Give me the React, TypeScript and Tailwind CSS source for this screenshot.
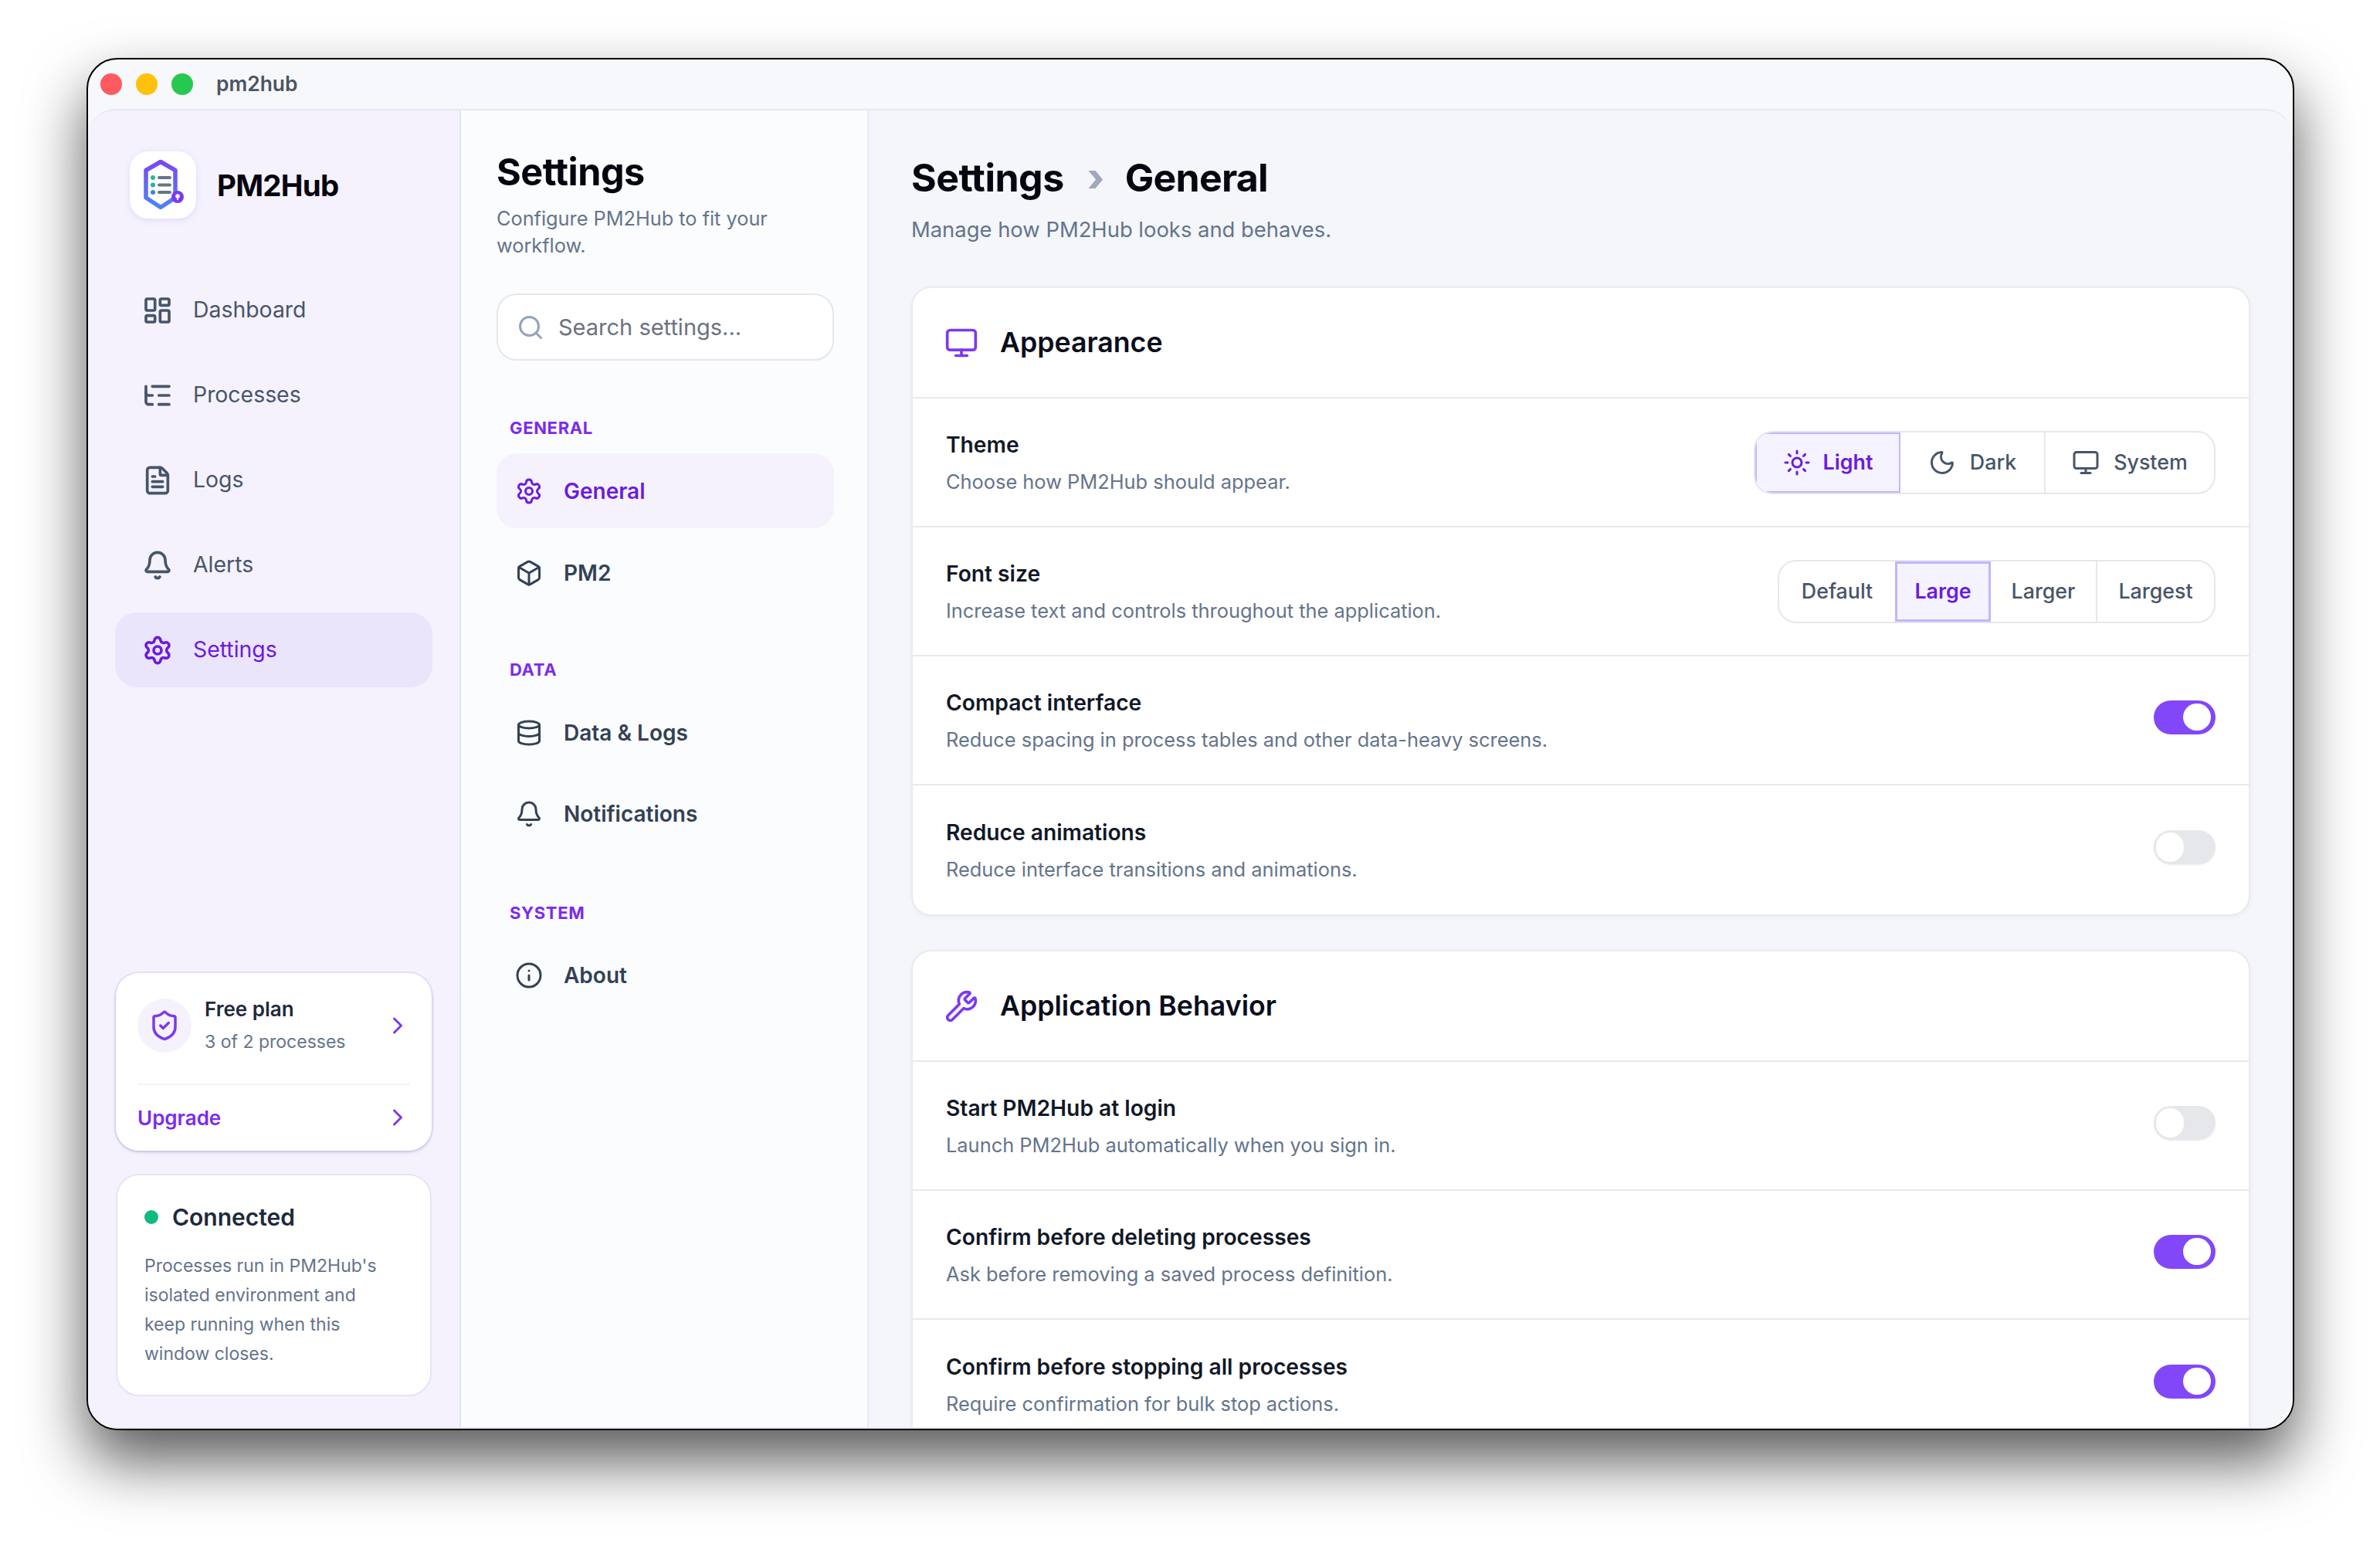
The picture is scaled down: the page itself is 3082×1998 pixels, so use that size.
import React from "react";
import {
  Bell,
  Box,
  ChevronRight,
  Database,
  FileText,
  Info,
  LayoutDashboard,
  ListTree,
  Monitor,
  Moon,
  Search,
  Settings,
  ShieldCheck,
  Sun,
  Wrench,
} from "lucide-react";

const Logo = () => (
  <svg width="60" height="68" viewBox="0 0 60 68" fill="none">
    <defs>
      <linearGradient id="hex" x1="0" y1="0" x2="0" y2="1">
        <stop offset="0" stopColor="#7b49ee" />
        <stop offset="1" stopColor="#4d83f6" />
      </linearGradient>
    </defs>
    <path
      d="M24 3.5 43 14.5V50L24 62.5 5 50V14.5Z"
      stroke="url(#hex)"
      strokeWidth="5.5"
      strokeLinejoin="round"
      fill="#ffffff"
    />
    <circle cx="14" cy="24" r="3" fill="#2fb58f" />
    <circle cx="14" cy="33.5" r="3" fill="#2aaf9f" />
    <circle cx="14" cy="43" r="3" fill="#3b82f6" />
    <path d="M22 24h14M22 33.5h14M22 43h14" stroke="#64748b" strokeWidth="4" strokeLinecap="round" />
    <circle cx="46" cy="49" r="8" fill="#7c3aed" />
    <circle cx="46" cy="48" r="2.8" fill="#ffffff" />
    <path d="M46 49v4" stroke="#ffffff" strokeWidth="1.8" />
  </svg>
);

const NavItem = ({ icon: Icon, label, active }: { icon: any; label: string; active?: boolean }) => (
  <div
    className={`flex h-[97px] items-center rounded-[28px] pl-[35px] text-[28.4px] ${
      active ? "bg-[#eae5fb] text-[#6b1be0]" : "text-[#475569]"
    }`}
  >
    <Icon size={40} strokeWidth={2.2} className="shrink-0" />
    <span className="ml-[26px]">{label}</span>
  </div>
);

const SubItem = ({ icon: Icon, label, active }: { icon: any; label: string; active?: boolean }) => (
  <div
    className={`flex h-[97px] items-center rounded-[26px] pl-[24px] text-[28px] font-semibold ${
      active ? "bg-[#f5f2fe] text-[#6b1be0]" : "text-[#334155]"
    }`}
  >
    <Icon size={36} strokeWidth={2} className="shrink-0" />
    <span className="ml-[27px]">{label}</span>
  </div>
);

const GroupLabel = ({ children }: { children: React.ReactNode }) => (
  <div className="h-[30px] pl-[17px] text-[22px] leading-[30px] font-bold tracking-[0.03em] text-[#7c2bee]">
    {children}
  </div>
);

const Toggle = ({ on }: { on?: boolean }) =>
  on ? (
    <div className="mb-[8px] flex h-[44px] w-[80px] items-center justify-end rounded-full bg-[#8247f8] pr-[6px]">
      <div className="h-[35px] w-[36px] rounded-full bg-white" />
    </div>
  ) : (
    <div className="mb-[8px] flex h-[44px] w-[80px] items-center rounded-full bg-[#e5e7eb] pl-[3px] shadow-[0_1px_2px_rgba(0,0,0,0.08)]">
      <div className="h-[38px] w-[36px] rounded-full bg-white" />
    </div>
  );

const Row = ({
  title,
  desc,
  children,
  last,
}: {
  title: string;
  desc: string;
  children: React.ReactNode;
  last?: boolean;
}) => (
  <div
    className={`flex h-[167px] shrink-0 items-center justify-between pr-[43px] pl-[43px] ${
      last ? "" : "border-b-2 border-[#e7e9ef]"
    }`}
  >
    <div className="pt-[3px]">
      <div className="text-[28.2px] leading-[36px] font-semibold text-[#111827]">{title}</div>
      <div className="mt-[12px] text-[25.4px] leading-[36px] text-[#64748b]">{desc}</div>
    </div>
    {children}
  </div>
);

const Card = ({
  icon: Icon,
  title,
  children,
}: {
  icon: any;
  title: string;
  children: React.ReactNode;
}) => (
  <div className="shrink-0 rounded-[26px] border-2 border-[#e9ebf1] bg-white shadow-[0_2px_6px_rgba(15,23,42,0.04)]">
    <div className="flex h-[143px] items-center border-b-2 border-[#e7e9ef] pl-[41px]">
      <Icon size={44} strokeWidth={2} className="text-[#7c3aed]" />
      <span className="ml-[28px] text-[35.7px] font-semibold text-[#0b0d1c]">{title}</span>
    </div>
    {children}
  </div>
);

export default function App() {
  return (
    <div className="h-[1998px] w-[3082px] overflow-hidden bg-white pt-[75px] pl-[112px] font-['Inter',sans-serif]">
      <div className="flex h-[1777px] w-[2859px] flex-col overflow-hidden rounded-[40px] border-2 border-black bg-[#f7f8fb] shadow-[0_40px_80px_rgba(0,0,0,0.65)]">
        <div className="flex h-[64px] shrink-0 items-center pl-[16px]">
          <div className="h-[28px] w-[28px] rounded-full bg-[#ff5a5f]" />
          <div className="ml-[18px] h-[28px] w-[28px] rounded-full bg-[#fec20d]" />
          <div className="ml-[18px] h-[28px] w-[28px] rounded-full bg-[#27c84f]" />
          <span className="ml-[30px] text-[26.4px] font-semibold text-[#4b5563]">pm2hub</span>
        </div>

        <div className="flex min-h-0 flex-1 overflow-hidden rounded-t-[36px] border-y-2 border-[#e6e7ef]">
          <aside className="flex w-[483px] shrink-0 flex-col border-r-2 border-[#e4e4f0] bg-[#f5f2fe] px-[35px] pb-[40px]">
            <div className="mt-[53px] flex items-center pl-[19px]">
              <div className="flex h-[87px] w-[86px] items-center justify-center rounded-[24px] bg-white pl-[6px] shadow-[0_2px_8px_rgba(109,80,220,0.14)]">
                <Logo />
              </div>
              <span className="mt-[2px] ml-[27px] text-[38.5px] font-bold tracking-[-0.02em] text-[#05060f]">PM2Hub</span>
            </div>
            <nav className="mt-[70px] flex flex-col gap-[13px]">
              <NavItem icon={LayoutDashboard} label="Dashboard" />
              <NavItem icon={ListTree} label="Processes" />
              <NavItem icon={FileText} label="Logs" />
              <NavItem icon={Bell} label="Alerts" />
              <NavItem icon={Settings} label="Settings" active />
            </nav>

            <div className="mx-[1px] mt-auto rounded-[30px] bg-white px-[28px] pt-[29px] pb-[1px] shadow-[0_2px_4px_rgba(80,70,160,0.22),0_0_0_2px_#e7e3f7]">
              <div className="flex h-[78px] items-center">
                <div className="flex h-[70px] w-[70px] shrink-0 items-center justify-center rounded-full bg-[#f5f2fe]">
                  <ShieldCheck size={42} strokeWidth={2} className="text-[#7c3aed]" />
                </div>
                <div className="ml-[17px] flex-1">
                  <div className="text-[26px] leading-[36px] font-semibold text-[#1e293b]">Free plan</div>
                  <div className="mt-[6px] text-[23px] leading-[36px] text-[#64748b]">3 of 2 processes</div>
                </div>
                <ChevronRight size={36} strokeWidth={2} className="-mr-[2px] text-[#7c3aed]" />
              </div>
              <div className="mt-[36px] flex h-[86px] items-center justify-between border-t-2 border-[#f3f3f8]">
                <span className="text-[26px] font-semibold text-[#7c2bee]">Upgrade</span>
                <ChevronRight size={36} strokeWidth={2} className="-mr-[2px] text-[#7c3aed]" />
              </div>
            </div>

            <div className="mx-[1px] mt-[30px] h-[288px] rounded-[30px] border-2 border-[#e7e3f7] bg-white px-[35px] pt-[34px]">
              <div className="flex items-center">
                <div className="h-[18px] w-[18px] rounded-full bg-[#10b981]" />
                <span className="ml-[18px] text-[30px] leading-[40px] font-semibold text-[#1e293b]">Connected</span>
              </div>
              <p className="mt-[24px] max-w-[310px] text-[23px] leading-[38px] text-[#64748b]">
                Processes run in PM2Hub's isolated environment and keep running when this window closes.
              </p>
            </div>
          </aside>

          <div className="flex w-[528px] shrink-0 flex-col border-r-2 border-[#e9ebf1] bg-[#fbfcfe] pr-[43px] pl-[46px]">
            <h1 className="mt-[50px] text-[48.5px] leading-[60px] font-bold tracking-[-0.01em] text-[#05060f]">Settings</h1>
            <p className="mt-[12px] text-[25.3px] leading-[35px] text-[#64748b]">Configure PM2Hub to fit your workflow.</p>
            <div className="mt-[45px] flex h-[87px] shrink-0 items-center rounded-[26px] border-2 border-[#e5e7eb] bg-white pl-[24px]">
              <Search size={36} strokeWidth={2} className="text-[#94a3b8]" />
              <span className="ml-[18px] text-[29px] text-[#6b7280]">Search settings...</span>
            </div>
            <div className="mt-[72px]">
              <GroupLabel>GENERAL</GroupLabel>
            </div>
            <div className="mt-[18px] flex flex-col gap-[9px]">
              <SubItem icon={Settings} label="General" active />
              <SubItem icon={Box} label="PM2" />
            </div>
            <div className="mt-[62px]">
              <GroupLabel>DATA</GroupLabel>
            </div>
            <div className="mt-[18px] flex flex-col gap-[8px]">
              <SubItem icon={Database} label="Data & Logs" />
              <SubItem icon={Bell} label="Notifications" />
            </div>
            <div className="mt-[65px]">
              <GroupLabel>SYSTEM</GroupLabel>
            </div>
            <div className="mt-[17px]">
              <SubItem icon={Info} label="About" />
            </div>
          </div>

          <main className="flex min-w-0 flex-1 flex-col overflow-hidden bg-[#f4f6fa] px-[55px]">
            <div className="mt-[57px] flex items-center text-[50px] leading-[60px] font-bold tracking-[-0.01em] text-[#05060f]">
              <span>Settings</span>
              <span className="mr-[27px] ml-[30px] font-extrabold text-[#a0a8be]">›</span>
              <span className="tracking-[-0.015em]">General</span>
            </div>
            <p className="mt-[17px] text-[27.4px] leading-[40px] text-[#64748b]">Manage how PM2Hub looks and behaves.</p>
            <div className="mt-[54px] flex flex-col gap-[44px]">
              <Card icon={Monitor} title="Appearance">
                <Row title="Theme" desc="Choose how PM2Hub should appear.">
                  <div className="flex h-[82px] items-stretch overflow-hidden rounded-[24px] border-2 border-[#e5e7eb] text-[26.8px] font-medium text-[#475569]">
                    <div className="flex w-[188px] items-center justify-center border-2 border-[#c4b5fd] bg-[#f5f3ff] text-[#6b1be0]">
                      <Sun size={36} strokeWidth={2} />
                      <span className="ml-[16px] font-semibold">Light</span>
                    </div>
                    <div className="flex w-[188px] items-center justify-center border-r-2 border-[#e5e7eb]">
                      <Moon size={36} strokeWidth={2} />
                      <span className="ml-[18px]">Dark</span>
                    </div>
                    <div className="flex w-[218px] items-center justify-center">
                      <Monitor size={36} strokeWidth={2} />
                      <span className="ml-[18px]">System</span>
                    </div>
                  </div>
                </Row>
                <Row title="Font size" desc="Increase text and controls throughout the application.">
                  <div className="flex h-[82px] items-stretch overflow-hidden rounded-[24px] border-2 border-[#e5e7eb] text-[26.8px] font-medium text-[#475569]">
                    <div className="flex w-[150px] items-center justify-center">Default</div>
                    <div className="flex w-[124px] items-center justify-center border-[3px] border-[#c4b5fd] bg-[#f5f3ff] font-semibold text-[#6b1be0]">
                      Large
                    </div>
                    <div className="flex w-[138px] items-center justify-center border-r-2 border-[#e5e7eb]">Larger</div>
                    <div className="flex w-[151px] items-center justify-center">Largest</div>
                  </div>
                </Row>
                <Row title="Compact interface" desc="Reduce spacing in process tables and other data-heavy screens.">
                  <Toggle on />
                </Row>
                <Row title="Reduce animations" desc="Reduce interface transitions and animations." last>
                  <Toggle />
                </Row>
              </Card>
              <Card icon={Wrench} title="Application Behavior">
                <Row title="Start PM2Hub at login" desc="Launch PM2Hub automatically when you sign in.">
                  <Toggle />
                </Row>
                <Row title="Confirm before deleting processes" desc="Ask before removing a saved process definition.">
                  <Toggle on />
                </Row>
                <Row title="Confirm before stopping all processes" desc="Require confirmation for bulk stop actions." last>
                  <Toggle on />
                </Row>
              </Card>
            </div>
          </main>
        </div>
      </div>
    </div>
  );
}
